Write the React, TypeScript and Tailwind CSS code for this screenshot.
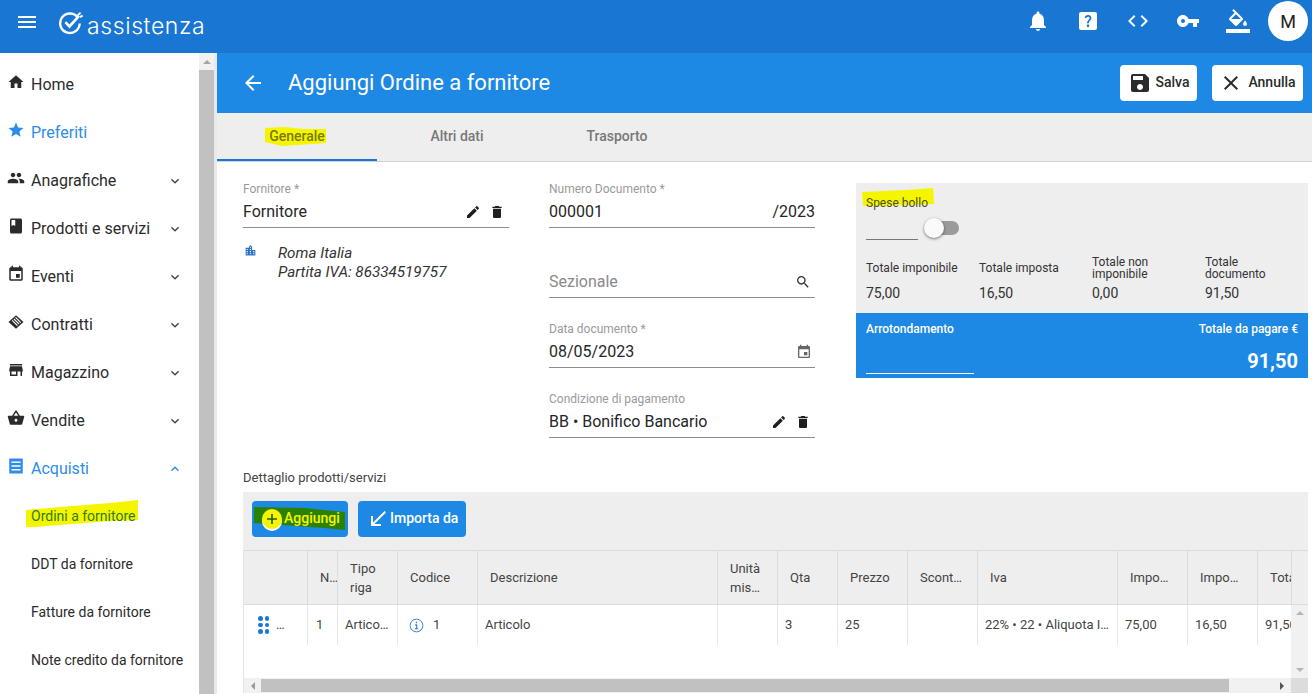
import type { ReactNode } from 'react'

const paths = {
  menu: 'M3 18h18v-2H3v2zm0-5h18v-2H3v2zm0-7v2h18V6H3z',
  home: 'M10 20v-6h4v6h5v-8h3L12 3 2 12h3v8z',
  star: 'M12 17.27L18.18 21l-1.64-7.03L22 9.24l-7.19-.61L12 2 9.19 8.63 2 9.24l5.46 4.73L5.82 21z',
  people:
    'M16 11c1.66 0 2.99-1.34 2.99-3S17.66 5 16 5c-1.66 0-3 1.34-3 3s1.34 3 3 3zm-8 0c1.66 0 2.99-1.34 2.99-3S9.66 5 8 5C6.34 5 5 6.34 5 8s1.34 3 3 3zm0 2c-2.33 0-7 1.17-7 3.5V19h14v-2.5c0-2.33-4.67-3.5-7-3.5zm8 0c-.29 0-.62.02-.97.05 1.16.84 1.97 1.97 1.97 3.45V19h6v-2.5c0-2.33-4.67-3.5-7-3.5z',
  book: 'M18 2H6c-1.1 0-2 .9-2 2v16c0 1.1.9 2 2 2h12c1.1 0 2-.9 2-2V4c0-1.1-.9-2-2-2zM6 4h5v8l-2.5-1.5L6 12V4z',
  event:
    'M17 12h-5v5h5v-5zM16 1v2H8V1H6v2H5c-1.11 0-1.99.9-1.99 2L3 19c0 1.1.89 2 2 2h14c1.1 0 2-.9 2-2V5c0-1.1-.9-2-2-2h-1V1h-2zm3 18H5V8h14v11z',
  contract:
    'M12 3l10 9-10 9L2 12zM8.6 8.4l7 7 1.1-1-7-7zM6.4 10.4l7 7 1.1-1-7-7zM10.8 6.4l7 7 1.1-1-7-7z',
  store: 'M20 4H4v2h16V4zm1 10v-2l-1-5H4l-1 5v2h1v6h10v-6h4v6h2v-6h1zm-9 4H6v-4h6v4z',
  basket:
    'M17.21 9l-4.38-6.56c-.19-.28-.51-.42-.83-.42-.32 0-.64.14-.83.43L6.79 9H2c-.55 0-1 .45-1 1 0 .09.01.18.04.27l2.54 9.27c.23.84 1 1.46 1.92 1.46h13c.92 0 1.69-.62 1.93-1.46l2.54-9.27L23 10c0-.55-.45-1-1-1h-4.79zM9 9l3-4.4L15 9H9zm3 8c-1.1 0-2-.9-2-2s.9-2 2-2 2 .9 2 2-.9 2-2 2z',
  list: 'M3 2h18v20H3zM6 6v2h12V6zM6 11v2h12v-2zM6 16v2h12v-2z',
  expand: 'M16.59 8.59L12 13.17 7.41 8.59 6 10l6 6 6-6z',
  less: 'M12 8l-6 6 1.41 1.41L12 10.83l4.59 4.58L18 14z',
  bell: 'M12 22c1.1 0 2-.9 2-2h-4c0 1.1.89 2 2 2zm6-6v-5c0-3.07-1.64-5.64-4.5-6.32V4c0-.83-.67-1.5-1.5-1.5s-1.5.67-1.5 1.5v.68C7.63 5.36 6 7.92 6 11v5l-2 2v1h16v-1l-2-2z',
  help: 'M19 3H5c-1.1 0-2 .9-2 2v14c0 1.1.9 2 2 2h14c1.1 0 2-.9 2-2V5c0-1.1-.9-2-2-2zm-6.99 15c-.7 0-1.26-.56-1.26-1.26 0-.71.56-1.25 1.26-1.25.71 0 1.25.54 1.25 1.25-.01.69-.54 1.26-1.25 1.26zm3.01-7.4c-.76 1.11-1.48 1.46-1.87 2.17-.16.29-.22.48-.22 1.41h-1.82c0-.49-.08-1.29.31-1.98.49-.87 1.42-1.39 1.96-2.16.57-.81.25-2.33-1.37-2.33-1.06 0-1.58.8-1.8 1.47L8.56 8.4C9.01 7.05 10.22 5.9 11.99 5.9c1.48 0 2.49.67 3.01 1.52.44.72.7 2.07.02 3.08z',
  code: 'M9.4 16.6L4.8 12l4.6-4.6L8 6l-6 6 6 6 1.4-1.4zm5.2 0l4.6-4.6-4.6-4.6L16 6l6 6-6 6-1.4-1.4z',
  key: 'M12.65 10C11.83 7.67 9.61 6 7 6c-3.31 0-6 2.69-6 6s2.69 6 6 6c2.61 0 4.83-1.67 5.65-4H17v4h4v-4h2v-4H12.65zM7 14c-1.1 0-2-.9-2-2s.9-2 2-2 2 .9 2 2-.9 2-2 2z',
  fill: 'M16.56 8.94L7.62 0 6.21 1.41l2.38 2.38-5.15 5.15c-.59.59-.59 1.54 0 2.12l5.5 5.5c.29.29.68.44 1.06.44s.77-.15 1.06-.44l5.5-5.5c.59-.58.59-1.53 0-2.12zM5.21 10L10 5.21 14.79 10H5.21zM19 11.5s-2 2.17-2 3.5c0 1.1.9 2 2 2s2-.9 2-2c0-1.33-2-3.5-2-3.5zM0 20h24v4H0z',
  save: 'M17 3H5c-1.11 0-2 .9-2 2v14c0 1.1.89 2 2 2h14c1.1 0 2-.9 2-2V7l-4-4zm-5 16c-1.66 0-3-1.34-3-3s1.34-3 3-3 3 1.34 3 3-1.34 3-3 3zm3-10H5V5h10v4z',
  close:
    'M19 6.41L17.59 5 12 10.59 6.41 5 5 6.41 10.59 12 5 17.59 6.41 19 12 13.41 17.59 19 19 17.59 13.41 12z',
  back: 'M20 11H7.83l5.59-5.59L12 4l-8 8 8 8 1.41-1.41L7.83 13H20v-2z',
  edit: 'M3 17.25V21h3.75L17.81 9.94l-3.75-3.75L3 17.25zM20.71 7.04c.39-.39.39-1.02 0-1.41l-2.34-2.34c-.39-.39-1.02-.39-1.41 0l-1.83 1.83 3.75 3.75 1.83-1.83z',
  trash: 'M6 19c0 1.1.9 2 2 2h8c1.1 0 2-.9 2-2V7H6v12zM19 4h-3.5l-1-1h-5l-1 1H5v2h14V4z',
  search:
    'M15.5 14h-.79l-.28-.27C15.41 12.59 16 11.11 16 9.5 16 5.91 13.09 3 9.5 3S3 5.91 3 9.5 5.91 16 9.5 16c1.61 0 3.09-.59 4.23-1.57l.27.28v.79l5 4.99L20.49 19l-4.99-5zm-6 0C7.01 14 5 11.99 5 9.5S7.01 5 9.5 5 14 7.01 14 9.5 11.99 14 9.5 14z',
  city: 'M15 11V5l-3-3-3 3v2H3v14h18V11h-6zm-8 8H5v-2h2v2zm0-4H5v-2h2v2zm0-4H5V9h2v2zm6 8h-2v-2h2v2zm0-4h-2v-2h2v2zm0-4h-2V9h2v2zm0-4h-2V5h2v2zm6 12h-2v-2h2v2zm0-4h-2v-2h2v2z',
  received: 'M20 5.41L18.59 4 7 15.59V9H5v10h10v-2H8.41z',
}

function Icon({ d, className }: { d: string; className: string }) {
  return (
    <svg viewBox="0 0 24 24" fill="currentColor" className={className}>
      <path d={d} />
    </svg>
  )
}

function Logo() {
  return (
    <svg viewBox="0 0 24 22" className="w-[26px] h-[24px] shrink-0" fill="none" stroke="white">
      <path d="M18.6 6.4A9 9 0 1 0 20 11.5" strokeWidth="2.2" />
      <path d="M6.8 10.2l3.8 4 8.6-9.6" strokeWidth="2.4" />
      <path d="M18.2 4l2.6-2.6M20 5.6l2.8-1.4" strokeWidth="1.8" />
    </svg>
  )
}

const menuItems = [
  { label: 'Home', icon: paths.home },
  { label: 'Preferiti', icon: paths.star, active: true },
  { label: 'Anagrafiche', icon: paths.people, arrow: true },
  { label: 'Prodotti e servizi', icon: paths.book, arrow: true },
  { label: 'Eventi', icon: paths.event, arrow: true },
  { label: 'Contratti', icon: paths.contract, arrow: true },
  { label: 'Magazzino', icon: paths.store, arrow: true },
  { label: 'Vendite', icon: paths.basket, arrow: true },
]

const subItems = ['DDT da fornitore', 'Fatture da fornitore', 'Note credito da fornitore']

function MenuRow({ label, icon, active, arrow }: { label: string; icon: string; active?: boolean; arrow?: boolean }) {
  return (
    <div className={`flex h-12 items-center pl-[7px] pr-4 ${active ? 'text-[#2d8ceb]' : 'text-[#2b2b2b]'}`}>
      <Icon d={icon} className="w-[18px] h-[18px] mr-[6px] -mt-1 shrink-0" />
      <span className="text-[16px] flex-1 whitespace-nowrap mt-[2px]">{label}</span>
      {arrow && <Icon d={paths.expand} className="w-4 h-4 mt-[2px] text-[#444]" />}
    </div>
  )
}

function Sidebar() {
  return (
    <aside className="w-[217px] shrink-0 flex bg-white h-full">
      <nav className="w-[199px] pt-[7px] overflow-hidden">
        {menuItems.map(item => (
          <MenuRow key={item.label} label={item.label} icon={item.icon} active={item.active} arrow={item.arrow} />
        ))}
        <div className="flex h-12 items-center pl-[7px] pr-4 text-[#2d8ceb]">
          <Icon d={paths.list} className="w-[18px] h-[18px] mr-[6px] -mt-1 shrink-0" />
          <span className="text-[16px] flex-1 mt-[2px]">Acquisti</span>
          <Icon d={paths.less} className="w-4 h-4 mt-[2px]" />
        </div>
        <div className="relative flex h-12 items-center pl-[31px] text-[14px] text-[#2e7d10]">
          {/* marker */}
          <svg className="absolute left-[25px] top-[3px]" width="114" height="33" viewBox="0 0 114 33">
            <path d="M1 15L35 12L85 8L113 5L113 25L85 26L10 32L1 32z" fill="#f5f500" />
          </svg>
          <span className="relative whitespace-nowrap">Ordini a fornitore</span>
        </div>
        {subItems.map(label => (
          <div key={label} className="flex h-12 items-center pl-[31px] text-[14px] text-[#2b2b2b] whitespace-nowrap">
            {label}
          </div>
        ))}
      </nav>
      <div className="w-[15px] bg-[#f1f1f1] flex flex-col shrink-0">
        <div className="h-[17px] flex items-center justify-center">
          <div className="w-0 h-0 border-x-[4px] border-x-transparent border-b-[4px] border-b-[#a3a3a3]" />
        </div>
        <div className="flex-1 bg-[#c1c1c1]" />
      </div>
      <div className="w-[3px] bg-[#e9e9e9] shrink-0" />
    </aside>
  )
}

function Field({ label, children, icons }: { label?: string; children: ReactNode; icons?: ReactNode }) {
  return (
    <div className="h-[46px] mb-6">
      <div className="h-[14px] text-[12px] leading-[14px] text-[#9a9a9a] whitespace-nowrap">{label}</div>
      <div className="h-8 flex items-center border-b border-[#8c8c8c] text-[16px] text-[#262626]">
        <div className="flex-1 whitespace-nowrap">{children}</div>
        {icons}
      </div>
    </div>
  )
}

function EditIcons() {
  return (
    <div className="flex items-center gap-2 mr-[4px] text-[#1f1f1f]">
      <Icon d={paths.edit} className="w-4 h-4" />
      <Icon d={paths.trash} className="w-4 h-4" />
    </div>
  )
}

const totals = [
  ['Totale imponibile', '75,00'],
  ['Totale imposta', '16,50'],
  ['Totale non imponibile', '0,00'],
  ['Totale documento', '91,50'],
]

function TotalsPanel() {
  return (
    <div className="mt-[21px] ml-px w-[452px] shrink-0 h-[195px] flex flex-col">
      <div className="h-[130px] bg-[#eeeeee] px-[10px] pt-[9px] relative">
        <svg className="absolute left-[5px] top-[5px]" width="73" height="20" viewBox="0 0 73 20">
          <path d="M1 4L45 2L72 0L73 16L40 17L2 18z" fill="#f5f500" />
        </svg>
        <div className="relative text-[12px] leading-[22px] text-[#4f4f18]">Spese bollo</div>
        <div className="flex h-[26px] mt-[6px]">
          <div className="w-[52px] h-5 border-b border-[#777]" />
          <div className="relative ml-[7px] w-[34px] h-[14px] mt-[1px] rounded-full bg-[#9b9b9b]">
            <div className="absolute left-[-1px] top-[-3px] w-5 h-5 rounded-full bg-[#fafafa] shadow-[0_1px_3px_rgba(0,0,0,0.5)]" />
          </div>
        </div>
        <div className="grid grid-cols-[113px_113px_113px_113px] mt-[7px]">
          {totals.map(([label, value]) => (
            <div key={label} className="pr-[18px]">
              <div className="h-[30px] flex items-center text-[12px] leading-[12px] text-[#333]">{label}</div>
              <div className="text-[14px] leading-[20px] text-[#333]">{value}</div>
            </div>
          ))}
        </div>
      </div>
      <div className="flex-1 bg-[#1e88e5] text-white px-[10px] flex justify-between pt-[8px]">
        <div className="w-[108px] flex flex-col">
          <div className="text-[12px] leading-[16px] font-medium">Arrotondamento</div>
          <div className="h-[37px] border-b border-white" />
        </div>
        <div className="flex flex-col items-end">
          <div className="text-[12px] leading-[16px] font-medium">Totale da pagare €</div>
          <div className="text-[20px] font-bold leading-[24px] mt-[12px]">91,50</div>
        </div>
      </div>
    </div>
  )
}

const headers = ['', 'N…', 'Tipo riga', 'Codice', 'Descrizione', 'Unità mis…', 'Qta', 'Prezzo', 'Scont…', 'Iva', 'Impo…', 'Impo…', 'Totale']

const rowCells = ['', '1', 'Artico…', '', 'Articolo', '', '3', '25', '', '22% • 22 • Aliquota I…', '75,00', '16,50', '91,50']

const gridCols =
  'grid grid-cols-[64px_30px_60px_80px_240px_60px_60px_70px_70px_140px_70px_70px_34px]'

function GripCell() {
  return (
    <div className="flex items-center pl-[14px] gap-[7px]">
      <div className="grid grid-cols-2 gap-x-[2px] gap-y-[2px]">
        {[0, 1, 2, 3, 4, 5].map(i => (
          <div key={i} className="w-[4.5px] h-[4.5px] rounded-full bg-[#1976d2]" />
        ))}
      </div>
      <span>…</span>
    </div>
  )
}

function InfoGlyph() {
  return (
    <svg viewBox="0 0 16 16" className="w-[15px] h-[15px] mr-[9px]" fill="none" stroke="#2d7fd8">
      <circle cx="8" cy="8" r="6.8" strokeWidth="1" />
      <path d="M6.5 7.3h1.7v4M6.4 11.5h3.4" strokeWidth="1.2" />
      <circle cx="8" cy="4.8" r="0.9" fill="#2d7fd8" stroke="none" />
    </svg>
  )
}

function DetailTable() {
  return (
    <div className="w-[1065px] h-[143px] border-l border-[#e4e4e4] flex flex-col text-[13px] text-[#444]">
      <div className="flex h-[55px] bg-[#eeeeee] border-y border-[#dcdcdc] shrink-0">
        <div className={`${gridCols} flex-1`}>
          {headers.map((head, i) => (
            <div
              key={i}
              className={`flex items-center overflow-hidden border-r border-[#dcdcdc] ${i === 0 ? '' : 'pl-3'} ${i === 2 || i === 5 ? 'leading-[19px] pr-2' : 'whitespace-nowrap'}`}
            >
              {head}
            </div>
          ))}
        </div>
        <div className="w-[16px]" />
      </div>
      <div className="flex flex-1 min-h-0">
        <div className="flex-1 min-w-0 overflow-hidden">
          <div className={`${gridCols} h-[40px]`}>
            {rowCells.map((cell, i) => (
              <div
                key={i}
                className={`flex items-center overflow-hidden whitespace-nowrap ${i === 12 ? '' : 'border-r border-[#e6e6e6]'} ${i === 0 ? '' : i === 3 ? 'pl-[11px]' : i === 1 ? 'pl-2' : 'pl-[7px]'}`}
              >
                {i === 0 && <GripCell />}
                {i === 3 && (
                  <>
                    <InfoGlyph />1
                  </>
                )}
                {cell}
              </div>
            ))}
          </div>
        </div>
        <div className="w-[17px] bg-[#f1f1f1] flex flex-col items-center justify-between py-[6px] shrink-0">
          <div className="w-0 h-0 border-x-[4px] border-x-transparent border-b-[4px] border-b-[#b5b5b5]" />
          <div className="w-0 h-0 border-x-[4px] border-x-transparent border-t-[4px] border-t-[#b5b5b5]" />
        </div>
      </div>
      <div className="h-[15px] flex bg-[#f1f1f1] shrink-0">
        <div className="w-[17px] flex items-center justify-center">
          <div className="w-0 h-0 border-y-[4px] border-y-transparent border-r-[4px] border-r-[#9a9a9a]" />
        </div>
        <div className="w-[968px] bg-[#c1c1c1] my-[1px]" />
        <div className="flex-1 flex items-center justify-end pr-[7px]">
          <div className="w-0 h-0 border-y-[4px] border-y-transparent border-l-[4px] border-l-[#555]" />
        </div>
        <div className="w-[17px] bg-[#dcdcdc]" />
      </div>
    </div>
  )
}

export default function App() {
  return (
    <div className="w-[1312px] h-[694px] overflow-hidden flex flex-col bg-white font-['Roboto',sans-serif]">
      <header className="h-[53px] bg-[#1976d2] flex items-center text-white shrink-0">
        <Icon d={paths.menu} className="w-6 h-6 ml-[15px] mb-[10px]" />
        <div className="flex items-center ml-[19px] mb-[7px] gap-[3px]">
          <Logo />
          <span className="font-['Inter',sans-serif] font-light text-[23px] leading-none tracking-[0.6px] mt-[6px]">
            assistenza
          </span>
        </div>
        <div className="flex items-center ml-auto mr-[4px] mb-[11px]">
          <Icon d={paths.bell} className="w-6 h-6 mr-[26px]" />
          <Icon d={paths.help} className="w-6 h-6 mr-[26px]" />
          <Icon d={paths.code} className="w-6 h-6 mr-[26px]" />
          <Icon d={paths.key} className="w-6 h-6 mr-[26px]" />
          <Icon d={paths.fill} className="w-6 h-6 mr-[18px]" />
          <div className="w-10 h-10 rounded-full bg-white text-[#222] text-[18px] flex items-center justify-center">
            M
          </div>
        </div>
      </header>

      <div className="flex flex-1 min-h-0">
        <Sidebar />
        <main className="flex-1 min-w-0 flex flex-col">
          <div className="h-[60px] bg-[#1e88e5] text-white flex items-center shrink-0 pl-6 pr-[9px]">
            <Icon d={paths.back} className="w-6 h-6 mr-[23px]" />
            <h1 className="text-[22px] flex-1 whitespace-nowrap -mt-[2px]">Aggiungi Ordine a fornitore</h1>
            <button className="h-9 w-[77px] bg-white rounded text-[#2b2b2b] text-[14px] font-medium flex items-center justify-center gap-[5px]">
              <Icon d={paths.save} className="w-6 h-6" />
              <span className="-mt-[2px] -ml-px">Salva</span>
            </button>
            <button className="h-9 w-[91px] ml-[15px] bg-white rounded text-[#2b2b2b] text-[14px] font-medium flex items-center justify-center gap-[5px]">
              <Icon d={paths.close} className="w-6 h-6" />
              <span className="-mt-[2px]">Annulla</span>
            </button>
          </div>

          <div className="h-[49px] bg-[#eeeeee] border-b border-[#d4d4d4] flex shrink-0 text-[14px] font-medium text-[#787878]">
            <div className="relative w-40 h-[48px] flex items-center justify-center border-b-2 border-[#1976d2] text-[#787a00]">
              <svg className="absolute left-[47px] top-[13px]" width="63" height="22" viewBox="0 0 63 22">
                <path d="M1 2L20 1L40 3L62 3L62 17L48 18L18 20L1 16z" fill="#f5f500" />
              </svg>
              <span className="relative">Generale</span>
            </div>
            <div className="w-40 h-[48px] pb-[2px] flex items-center justify-center">Altri dati</div>
            <div className="w-40 h-[48px] pb-[2px] flex items-center justify-center">Trasporto</div>
          </div>

          <div className="flex pl-[26px] gap-10 h-[299px] shrink-0">
            <div className="w-[266px] pt-[20px]">
              <Field label="Fornitore *" icons={<EditIcons />}>
                Fornitore
              </Field>
              <div className="flex -mt-[8px]">
                <Icon d={paths.city} className="w-[13px] h-[13px] ml-[1px] text-[#2f74c0] shrink-0" />
                <div className="ml-[21px] italic text-[15.2px] leading-[19px] text-[#333] whitespace-nowrap">
                  Roma Italia
                  <br />
                  Partita IVA: 86334519757
                </div>
              </div>
            </div>
            <div className="w-[266px] pt-[20px]">
              <Field label="Numero Documento *" icons={<span>/2023</span>}>
                000001
              </Field>
              <Field icons={<Icon d={paths.search} className="w-4 h-4 mr-[4px] text-[#333]" />}>
                <span className="text-[#8a8a8a]">Sezionale</span>
              </Field>
              <Field label="Data documento *" icons={<Icon d={paths.event} className="w-4 h-4 mr-[3px] text-[#666]" />}>
                08/05/2023
              </Field>
              <Field label="Condizione di pagamento" icons={<EditIcons />}>
                BB • Bonifico Bancario
              </Field>
            </div>
            <TotalsPanel />
          </div>

          <div className="pl-[26px]">
            <div className="h-[31px] pt-2 text-[13px] leading-[18px] text-[#444]">Dettaglio prodotti/servizi</div>
            <div className="w-[1065px] h-[58px] bg-[#eeeeee] flex items-start pt-[9px] gap-[10px] pl-[9px] text-white text-[14px] font-medium">
              <button className="relative h-9 w-[96px] bg-[#1e88e5] rounded flex items-center pl-[10px] gap-[2px]">
                <svg className="absolute left-[2px] top-[6px]" width="92" height="24" viewBox="0 0 92 24">
                  <path d="M0 0L50 1L91 5L91 23L70 21L0 16z" fill="#2a8200" />
                </svg>
                <span className="relative w-5 h-5 rounded-full bg-[#f5f500] text-[#1c5c20] flex items-center justify-center shadow-[0_2px_0_#fff]">
                  <svg viewBox="0 0 12 12" className="w-3 h-3" stroke="currentColor" strokeWidth="1.6">
                    <path d="M6 1v10M1 6h10" />
                  </svg>
                </span>
                <span className="relative text-[#f5f500] -mt-[2px]">Aggiungi</span>
              </button>
              <button className="h-9 w-[108px] bg-[#1e88e5] rounded flex items-center pl-2">
                <Icon d={paths.received} className="w-6 h-6" />
                <span className="-mt-[2px]">Importa da</span>
              </button>
            </div>
            <DetailTable />
          </div>
        </main>
      </div>
    </div>
  )
}
